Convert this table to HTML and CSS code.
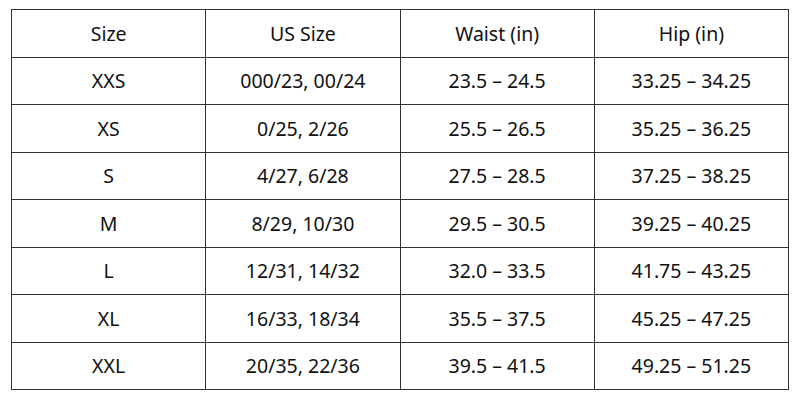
FILE: index.html
```html
<!DOCTYPE html>
<html lang="en">
<head>
  <meta charset="UTF-8">
  <meta name="viewport" content="width=device-width, initial-scale=1.0">
  <title>Size Chart</title>
  <link rel="stylesheet" href="styles.css">
</head>
<body>
  <table class="size-chart">
    <tr><th>Size</th><th>US Size</th><th>Waist (in)</th><th>Hip (in)</th></tr>
    <tr><td>XXS</td><td>000/23, 00/24</td><td>23.5 – 24.5</td><td>33.25 – 34.25</td></tr>
    <tr><td>XS</td><td>0/25, 2/26</td><td>25.5 – 26.5</td><td>35.25 – 36.25</td></tr>
    <tr><td>S</td><td>4/27, 6/28</td><td>27.5 – 28.5</td><td>37.25 – 38.25</td></tr>
    <tr><td>M</td><td>8/29, 10/30</td><td>29.5 – 30.5</td><td>39.25 – 40.25</td></tr>
    <tr><td>L</td><td>12/31, 14/32</td><td>32.0 – 33.5</td><td>41.75 – 43.25</td></tr>
    <tr><td>XL</td><td>16/33, 18/34</td><td>35.5 – 37.5</td><td>45.25 – 47.25</td></tr>
    <tr><td>XXL</td><td>20/35, 22/36</td><td>39.5 – 41.5</td><td>49.25 – 51.25</td></tr>
  </table>
</body>
</html>
```

FILE: styles.css
```css
body {
  margin: 0;
  padding: 9px 11px;
  background: #fff;
  font-family: "Noto Sans", Arial, sans-serif;
  color: #111;
}

.size-chart {
  width: 778px;
  border-collapse: collapse;
  table-layout: fixed;
}

.size-chart th,
.size-chart td {
  height: 46.5px;
  padding: 0;
  border: 1.5px solid #333;
  text-align: center;
  font-size: 19.5px;
  font-weight: normal;
}
```
